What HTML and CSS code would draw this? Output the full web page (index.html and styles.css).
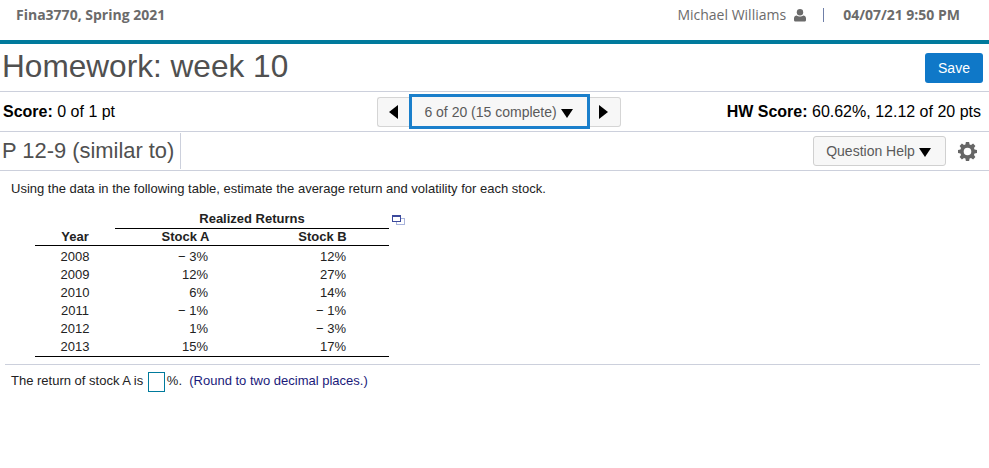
FILE: index.html
```html
<!DOCTYPE html>
<html lang="en">
<head>
  <meta charset="UTF-8">
  <title>Homework: week 10</title>
  <link rel="stylesheet" href="styles.css">
</head>
<body>
<div class="topbar">
  <span class="course">Fina3770, Spring 2021</span>
  <div class="topbar-right">
    <span class="user">Michael Williams</span>
    <svg class="user-icon" width="12" height="13" viewBox="0 0 12 13"><circle cx="6" cy="3.2" r="3.2" fill="#6b6b6b"/><path d="M0 11V9.2C0 7.6 1.2 6.4 2.8 6.4 3.6 7 4.8 7.4 6 7.4S8.400 7 9.2 6.400C10.800 6.400 12 7.600 12 9.200V11C12 12.100 11.200 12.500 10.400 12.500H1.600C.8 12.500 0 12.100 0 11Z" fill="#6b6b6b"/></svg>
    <span class="sep"></span>
    <span class="clock">04/07/21 9:50 PM</span>
  </div>
</div>

<div class="title-row">
  <h1>Homework: week 10</h1>
  <button class="save">Save</button>
</div>

<div class="score-row">
  <div class="score"><b>Score:</b> 0 of 1 pt</div>
  <div class="pager">
    <button class="pager-arrow pager-prev"><span class="tri-left"></span></button>
    <button class="pager-mid">6 of 20 (15 complete) <span class="tri-down"></span></button>
    <button class="pager-arrow pager-next"><span class="tri-right"></span></button>
  </div>
  <div class="hw-score"><b>HW Score:</b> 60.62%, 12.12 of 20 pts</div>
</div>

<div class="question-row">
  <h2>P 12-9 (similar to)</h2>
  <div class="question-tools">
    <button class="help">Question Help <span class="tri-down"></span></button>
    <svg class="gear" width="19" height="19" viewBox="0 0 20 20"><path fill-rule="evenodd" fill="#666" d="M8.300 0h3.400l.5 2.600 1.500.6 2.200-1.500 2.400 2.400-1.500 2.200.6 1.500 2.600.5v3.400l-2.600.5-.6 1.500 1.500 2.200-2.400 2.400-2.200-1.500-1.500.6-.5 2.600H8.300l-.5-2.600-1.500-.6-2.200 1.500-2.400-2.400 1.500-2.200-.6-1.500L0 11.700V8.300l2.600-.5.6-1.500-1.500-2.200 2.400-2.400 2.200 1.500 1.500-.6zM10 6a4 4 0 1 0 0 8 4 4 0 0 0 0-8z"/></svg>
  </div>
</div>

<div class="content">
  <p class="intro">Using the data in the following table, estimate the average return and volatility for each stock.</p>
  <div class="table-wrap">
    <table class="returns">
      <colgroup>
        <col class="col-year">
        <col class="col-a">
        <col class="col-b">
      </colgroup>
      <thead>
        <tr class="head-top"><th class="year"></th><th colspan="2" class="group">Realized Returns</th></tr>
        <tr class="head-sub"><th class="year">Year</th><th class="a">Stock A</th><th class="b">Stock B</th></tr>
      </thead>
      <tbody>
        <tr class="first"><td class="year">2008</td><td class="a">&minus; 3%</td><td class="b">12%</td></tr>
        <tr><td class="year">2009</td><td class="a">12%</td><td class="b">27%</td></tr>
        <tr><td class="year">2010</td><td class="a">6%</td><td class="b">14%</td></tr>
        <tr><td class="year">2011</td><td class="a">&minus; 1%</td><td class="b">&minus; 1%</td></tr>
        <tr><td class="year">2012</td><td class="a">1%</td><td class="b">&minus; 3%</td></tr>
        <tr><td class="year">2013</td><td class="a">15%</td><td class="b">17%</td></tr>
      </tbody>
    </table>
    <svg class="popout" width="13" height="10" viewBox="0 0 13 10"><rect x="4.500" y="3.500" width="8" height="6" fill="#fff" stroke="#a9b4dc"/><rect x=".5" y=".5" width="8" height="6" fill="#fff" stroke="#3c4a9c"/><rect x="0" y="0" width="9" height="2" fill="#3c4a9c"/></svg>
  </div>
  <hr class="divider">
  <p class="answer">The return of stock A is <span class="answer-box"></span>%.&nbsp; <span class="hint">(Round to two decimal places.)</span></p>
</div>
</body>
</html>
```

FILE: styles.css
```css
body {
  font-family: "Liberation Sans", Arial, sans-serif;
  margin: 0;
  color: #000;
  background: #fff;
}

button {
  font-family: inherit;
  cursor: pointer;
}

.topbar {
  height: 40px;
  box-sizing: border-box;
  display: flex;
  justify-content: space-between;
  align-items: center;
  padding: 0 29px 12px 16px;
  font-family: "Open Sans", sans-serif;
  font-size: 14px;
  color: #6b6b6b;
}

.course, .clock {
  font-weight: 700;
}

.topbar-right {
  display: flex;
  align-items: center;
}

.user-icon {
  margin: 2px 0 0 8px;
}

.sep {
  width: 1px;
  height: 14px;
  background: #6f7fa8;
  margin: 2px 19px 0 17px;
}

.title-row {
  border-top: 4px solid #007a9c;
  border-bottom: 1px solid #ccd0dc;
  height: 47px;
  display: flex;
  justify-content: space-between;
  align-items: center;
  padding: 0 6px 0 2px;
}

h1 {
  margin: 0 0 3px;
  font-size: 31.6px;
  font-weight: 400;
  color: #505050;
}

.save {
  width: 58px;
  height: 30px;
  background: #0f78c8;
  color: #fff;
  border: 0;
  border-radius: 3px;
  font-size: 14px;
}

.score-row {
  height: 39px;
  border-bottom: 1px solid #ccd0dc;
  display: grid;
  grid-template-columns: 374px auto 1fr;
  align-items: center;
  padding: 0 8px 0 3px;
  font-size: 16px;
}

.hw-score {
  text-align: right;
}

.pager {
  display: flex;
  align-items: center;
}

.pager-arrow {
  width: 32px;
  height: 30px;
  background: #f7f7f7;
  border: 1px solid #d5d5d5;
  padding: 0;
  display: flex;
  align-items: center;
  justify-content: center;
}

.pager-prev {
  border-right: 0;
  border-radius: 3px 0 0 3px;
}

.pager-next {
  width: 31px;
  padding-right: 4px;
  border-left: 0;
  border-radius: 0 3px 3px 0;
}

.pager-mid {
  width: 181px;
  height: 35px;
  background: #f7f7f7;
  border: 3px solid #1a7fcb;
  color: #5a5a5a;
  font-size: 14px;
  padding: 0 2px 0 0;
  white-space: nowrap;
}

.tri-left, .tri-right, .tri-down {
  display: inline-block;
  width: 0;
  height: 0;
  border-style: solid;
  border-color: transparent;
}

.tri-left {
  border-width: 7px 9px 7px 0;
  border-right-color: #000;
}

.tri-right {
  border-width: 7px 0 7px 9px;
  border-left-color: #000;
}

.tri-down {
  border-width: 9px 6.5px 0;
  border-top-color: #000;
  vertical-align: -1px;
}

.question-row {
  height: 38px;
  border-bottom: 1px solid #ccd0dc;
  display: flex;
  justify-content: space-between;
  align-items: center;
  padding-right: 12px;
}

h2 {
  margin: 0;
  font-size: 21.9px;
  font-weight: 400;
  color: #505050;
  height: 36px;
  line-height: 36px;
  width: 178px;
  padding-left: 2px;
  border-right: 1px solid #ccd0dc;
  white-space: nowrap;
}

.question-tools {
  display: flex;
  align-items: center;
  gap: 12px;
}

.help {
  width: 133px;
  height: 30px;
  background: #f7f7f7;
  border: 1px solid #d0d0d0;
  border-radius: 3px;
  color: #5a5a5a;
  font-size: 14px;
  padding: 0 2px 0 0;
}

.content {
  padding: 0 9px 0 5px;
  font-size: 13px;
  color: #222;
}

.intro {
  margin: 0;
  padding: 10px 0 0 6px;
  line-height: 15px;
}

.table-wrap {
  position: relative;
  margin: 14px 0 0 30px;
  width: 354px;
}

.returns {
  width: 354px;
  border-collapse: collapse;
  table-layout: fixed;
  line-height: 18px;
  color: #222;
  border-bottom: 1px solid #000;
}

.col-year {
  width: 80px;
}

.col-a {
  width: 141px;
}

.col-b {
  width: 133px;
}

.returns th, .returns td {
  padding: 0;
  font-weight: 400;
}

.returns th {
  font-weight: 700;
}

.returns .year {
  text-align: center;
}

.returns .group {
  text-align: center;
  border-bottom: 1px solid #000;
}

.returns .a {
  text-align: right;
  padding-right: 48px;
}

.returns .b {
  text-align: right;
  padding-right: 43px;
}

.returns th.a, .returns th.b {
  text-align: center;
  padding-right: 0;
}

.head-sub th {
  border-bottom: 1px solid #000;
  line-height: 16px;
}

.first td {
  padding-top: 2px;
}

.popout {
  position: absolute;
  left: 357px;
  top: 5px;
}

.divider {
  border: 0;
  border-top: 1px solid #ccd0dc;
  margin: 7px 0 0;
}

.answer {
  margin: 0;
  padding: 7px 0 0 6px;
  line-height: 18px;
}

.answer-box {
  display: inline-block;
  width: 17px;
  height: 20px;
  margin: 0 2px 0 1px;
  box-sizing: border-box;
  border: 1.5px solid #007a9c;
  vertical-align: middle;
}

.hint {
  color: #1a1a7a;
}
```
